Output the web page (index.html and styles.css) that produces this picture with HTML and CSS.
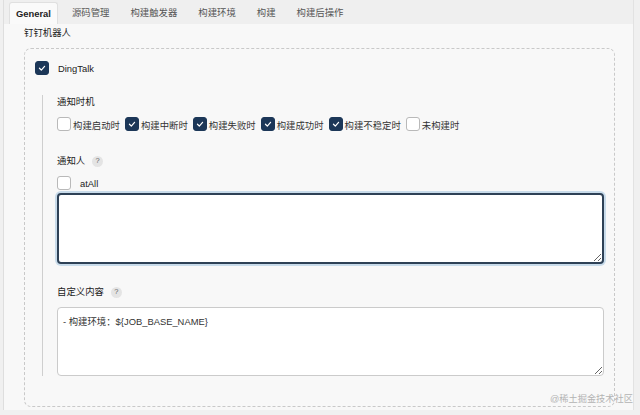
FILE: index.html
```html
<!DOCTYPE html>
<html lang="zh">
<head>
<meta charset="utf-8">
<link rel="stylesheet" href="styles.css">
</head>
<body>
<div class="page">
  <div class="tabs">
    <div class="tab active">General</div>
    <div class="tab">源码管理</div>
    <div class="tab">构建触发器</div>
    <div class="tab">构建环境</div>
    <div class="tab">构建</div>
    <div class="tab">构建后操作</div>
  </div>
  <div class="content">
    <div class="title">钉钉机器人</div>
    <div class="box">
      <label class="check-row">
        <span class="cb on"><svg viewBox="0 0 14 14"><polyline points="4,7.3 6.2,9.4 10,5" /></svg></span>
        <span class="cb-text dt">DingTalk</span>
      </label>
      <div class="section">
        <div class="label">通知时机</div>
        <div class="opts">
          <span class="cb"></span><span class="opt">构建启动时</span>
          <span class="cb on"><svg viewBox="0 0 14 14"><polyline points="4,7.3 6.2,9.4 10,5" /></svg></span><span class="opt">构建中断时</span>
          <span class="cb on"><svg viewBox="0 0 14 14"><polyline points="4,7.3 6.2,9.4 10,5" /></svg></span><span class="opt">构建失败时</span>
          <span class="cb on"><svg viewBox="0 0 14 14"><polyline points="4,7.3 6.2,9.4 10,5" /></svg></span><span class="opt">构建成功时</span>
          <span class="cb on"><svg viewBox="0 0 14 14"><polyline points="4,7.3 6.2,9.4 10,5" /></svg></span><span class="opt">构建不稳定时</span>
          <span class="cb"></span><span class="opt">未构建时</span>
        </div>
        <div class="label help-row l2">通知人 <span class="help">?</span></div>
        <label class="check-row atall">
          <span class="cb"></span>
          <span class="cb-text">atAll</span>
        </label>
        <textarea class="ta focus"></textarea>
        <div class="label help-row l3">自定义内容 <span class="help">?</span></div>
        <textarea class="ta plain">- 构建环境：${JOB_BASE_NAME}</textarea>
      </div>
    </div>
  </div>
  <div class="watermark">@稀土掘金技术社区</div>
</div>
</body>
</html>
```

FILE: styles.css
```css
* { box-sizing: border-box; }
html, body {
  margin: 0;
  padding: 0;
  background: #f0f0f0;
  font-family: "Liberation Sans", "Noto Sans CJK SC", sans-serif;
  color: #333;
}
.page {
  position: relative;
  margin-left: 3px;
  width: 631px;
  height: 410px;
  background: #f8f8f8;
  border-left: 1px solid #dedede;
  border-right: 1px solid #e2e2e2;
}
.tabs {
  display: flex;
  align-items: flex-end;
  height: 24px;
  padding-left: 5px;
  background: #efefef;
}
.tab {
  height: 22px;
  line-height: 22px;
  padding: 0 7px;
  margin-right: 7px;
  font-size: 9.4px;
  color: #555;
}
.tab.active {
  background: #fafafa;
  border: 1px solid #e0e0e0;
  border-bottom: none;
  border-radius: 3px 3px 0 0;
  font-weight: bold;
  color: #222;
  padding: 0 6px;
  line-height: 21px;
}
.content {
  padding-left: 20px;
  padding-right: 18px;
}
.title {
  font-size: 9.4px;
  line-height: 17px;
  height: 17px;
  color: #222;
}
.box {
  margin-top: 7px;
  border: 1px dashed #c9c9c9;
  border-radius: 7px;
  padding: 12px 10px 30px 10px;
  height: 359px;
}
.check-row {
  display: flex;
  align-items: center;
  height: 14px;
}
.cb {
  display: inline-flex;
  align-items: center;
  justify-content: center;
  width: 14px;
  height: 14px;
  flex: none;
  border: 1px solid #b9b9b9;
  border-radius: 3px;
  background: #fff;
}
.cb.on {
  background: #1c3758;
  border-color: #1c3758;
}
.cb svg {
  width: 14px;
  height: 14px;
  fill: none;
  stroke: #fff;
  stroke-width: 1.4;
  stroke-linecap: round;
  stroke-linejoin: round;
}
.cb-text {
  font-size: 9.4px;
  margin-left: 9px;
  color: #222;
}
.dt { margin-left: 9px; }
.section {
  margin-top: 20px;
  margin-left: 7px;
  border-left: 1px solid #cfcfcf;
  padding-left: 14px;
  padding-right: 0;
}
.label {
  font-size: 9.4px;
  line-height: 13px;
  height: 13px;
  color: #222;
}
.opts {
  display: flex;
  align-items: center;
  margin-top: 8px;
  height: 15px;
}
.opt {
  font-size: 9.4px;
  line-height: 12px;
  margin-left: 2px;
  margin-right: 5px;
  padding-top: 5px;
  color: #333;
}
.help-row {
  display: flex;
  align-items: center;
}
.l2 { margin-top: 23px; height: 14px; line-height: 14px; }
.l3 { margin-top: 21px; height: 14px; line-height: 14px; }
.help {
  display: inline-flex;
  align-items: center;
  justify-content: center;
  width: 11px;
  height: 11px;
  border-radius: 50%;
  background: #e4e4e4;
  color: #666;
  font-size: 7.5px;
  margin-left: 7px;
}
.atall { margin-top: 8px; }
.ta {
  display: block;
  width: 547px;
  resize: vertical;
  background: #fff;
  font-family: "Liberation Sans", "Noto Sans CJK SC", sans-serif;
  font-size: 9.4px;
  color: #333;
  border-radius: 4px;
  outline: none;
}
.ta.focus {
  margin-top: 3px;
  height: 71px;
  border: 2px solid #2e4156;
  box-shadow: 0 0 0 2px #c8dbea;
}
.ta.plain {
  margin-top: 8px;
  height: 69px;
  border: 1px solid #cbcbcb;
  padding: 7px 5px;
  line-height: 13px;
}
.watermark {
  position: absolute;
  left: 546px;
  top: 391px;
  font-size: 9.2px;
  color: #b3b3b3;
  white-space: nowrap;
}
```
